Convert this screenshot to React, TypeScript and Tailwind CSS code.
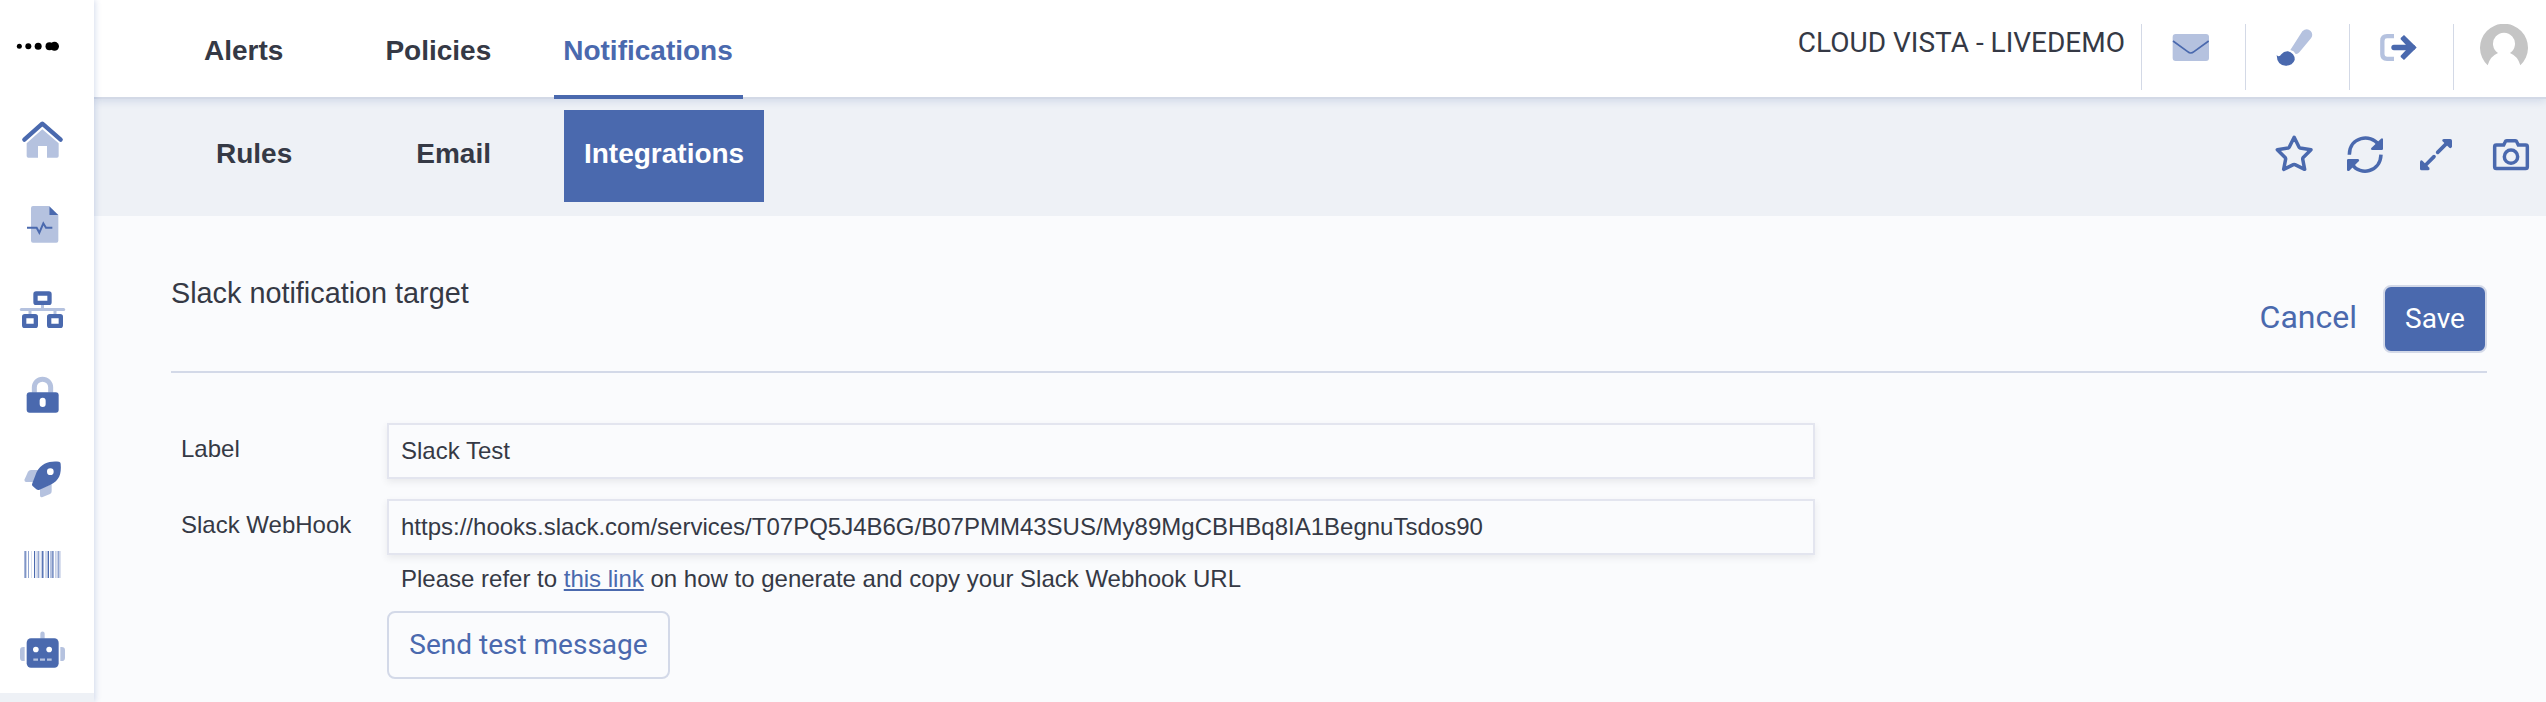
import React from "react";

const P = "#4a69ae";
const L = "#b5c2df";

const sideIcons: { name: string; top: number; art: React.ReactNode }[] = [
  {
    name: "Home",
    top: 291,
    art: (
      <>
        <path d="M127 388 L176 430 V468 Q176 473 171 473 H141 V438 H114 V473 H85 Q80 473 80 468 V430 Z" fill={L} />
        <path d="M73 419 L127 371 L182 419" fill="none" stroke={P} strokeWidth="13" strokeLinecap="round" strokeLinejoin="round" />
      </>
    ),
  },
  {
    name: "Reports",
    top: 546,
    art: (
      <>
        <path d="M99 618 H148 V645 H175 V722 Q175 728 169 728 H99 Q93 728 93 722 V624 Q93 618 99 618 Z" fill={L} />
        <path d="M148 619 L175 645 H148 Z" fill={P} />
        <path d="M81 683 H110 L118 698 L130 670 L138 683 H157" fill="none" stroke={P} strokeWidth="6" />
      </>
    ),
  },
  {
    name: "Network",
    top: 801,
    art: (
      <>
        <path d="M64 928.500 H191" stroke={L} strokeWidth="9" strokeLinecap="round" />
        <path d="M127.500 914 V926 M90 930 V943 M165 930 V943" stroke={L} strokeWidth="9" />
        <rect x="106.500" y="880.500" width="42" height="28" rx="2" fill="#fff" stroke={P} strokeWidth="13" strokeLinejoin="round" />
        <rect x="72.500" y="948.500" width="35" height="29" rx="2" fill="#fff" stroke={P} strokeWidth="13" strokeLinejoin="round" />
        <rect x="147.500" y="948.500" width="35" height="29" rx="2" fill="#fff" stroke={P} strokeWidth="13" strokeLinejoin="round" />
      </>
    ),
  },
  {
    name: "Security",
    top: 6,
    art: (
      <>
        <path d="M103 128 V112 A24.500 24.500 0 0 1 152 112 V128" fill="none" stroke={L} strokeWidth="15" />
        <rect x="80" y="127" width="96" height="61" rx="9" fill={P} />
        <rect x="119" y="143" width="18" height="28" rx="9" fill="#fff" />
      </>
    ),
  },
  {
    name: "Deploy",
    top: 261,
    art: (
      <>
        <path d="M116 360 H93 Q87 360 84 365 L74 388 Q72 396 79 396 H100 Z" fill={L} />
        <path d="M155 403 V424 Q155 430 150 432 L128 441 Q120 444 120 436 V416 Z" fill={L} />
        <path d="M110 366 C125 338 150 332 177 335 Q182 336 182 341 C185 372 177 392 152 404 L117 420 Q113 421 109 418 L97 407 Q95 404 97 400 Z" fill={P} />
        <circle cx="151" cy="365" r="10" fill="#fff" />
      </>
    ),
  },
  {
    name: "Barcode",
    top: 516,
    art: (
      <g shapeRendering="crispEdges">
        {[
          "#a9b8da", "#8095c6", "#ccd5e9", "#fff", "#92a5d0", "#fff", "#fff", "#dae0ef", "#fff", "#fff",
          "#4a69ae", "#e6eaf4", "#dae0ef", "#c8d1e7", "#92a5d0", "#dae0ef", "#eef1f7", "#c8d1e7", "#5b77b6", "#a9b8da",
          "#fff", "#d2daec", "#d2daec", "#b5c2df", "#4a69ae", "#fff", "#b5c2df", "#b5c2df", "#8095c6", "#a3b3d7",
          "#fff", "#c8d1e7", "#dae0ef", "#c8d1e7", "#92a5d0", "#c8d1e7", "#dae0ef",
        ].map((c, i) => (
          <rect key={i} x={72 + i * 3} y="603" width="3" height="81" fill={c} />
        ))}
      </g>
    ),
  },
  {
    name: "Assistant",
    top: 771,
    art: (
      <>
        <path d="M121 866 V851 A6.500 6.500 0 0 1 134 851 V866 Z" fill={L} />
        <path d="M74 891 H70 Q60 891 60 901 V923 Q60 933 70 933 H74 Z M181 891 H185 Q195 891 195 901 V923 Q195 933 185 933 H181 Z" fill={L} />
        <rect x="80" y="865" width="96" height="88" rx="13" fill={P} />
        <circle cx="107.500" cy="898.500" r="8.500" fill="#fff" />
        <circle cx="147.500" cy="898.500" r="8.500" fill="#fff" />
        <path d="M100 929 H114 M120 929 H135 M141 929 H155" stroke={L} strokeWidth="7" />
      </>
    ),
  },
];

const headerIcons: { name: string; left: number; art: React.ReactNode }[] = [
  {
    name: "Messages",
    left: 36,
    art: (
      <>
        <rect x="128" y="102" width="109" height="81" rx="9" fill={L} />
        <path d="M129 123 L173 155 Q182 163 192 155 L236 123" fill="none" stroke={P} strokeWidth="5" />
      </>
    ),
  },
  {
    name: "Theme",
    left: 348,
    art: (
      <>
        <path d="M517 94 Q530 82 542 93 Q551 104 543 115 L508 157 Q503 163 497 162 Q492 152 481 150 Z" fill={L} />
        <path d="M440 165 Q447 174 454 163 Q462 153 474 154 Q482 155 489 163 Q495 171 494 180 Q488 197 467 197 Q441 196 440 165 Z" fill={P} />
      </>
    ),
  },
  {
    name: "Log out",
    left: 660,
    art: (
      <>
        <path d="M792 108.500 H771 Q757 108.500 757 122 V163 Q757 176.500 771 176.500 H792" fill="none" stroke={L} strokeWidth="13" />
        <path d="M792 142.500 H848" stroke={P} strokeWidth="16" strokeLinecap="round" />
        <path d="M822 105 L860 142.500 L822 180 L812 171 V167 L828 150 V135 L812 118 V114 Z" fill={P} />
      </>
    ),
  },
];

const actions: { name: string; box: string; cls: string; art: React.ReactNode }[] = [
  {
    name: "Favourite",
    box: "66 60 132 132",
    cls: "",
    art: (
      <path d="M132.500 82 L147 111 Q148 113 150 114 L183 119 L159 143 Q158 145 158 147 L164 178 L135 164 Q132.500 163 130 164 L101 178 L107 147 Q107 145 106 143 L82 119 L115 114 Q117 113 118 111 Z" fill="none" stroke={P} strokeWidth="10.500" strokeLinejoin="round" />
    ),
  },
  {
    name: "Refresh",
    box: "279 60 132 132",
    cls: "ml-[27px]",
    art: (
      <>
        <path d="M298 134 C298 79 363 71 385 103 M393 134 C391 187 331 198 307 164" fill="none" stroke={P} strokeWidth="10.500" />
        <path d="M399 87 V117 Q399 120 395 120 H366 Q360 118 364 114 L393 86 Q397 83 399 87 Z" fill={P} />
        <path d="M291 181 V151 Q291 147 295 147 H324 Q330 149 326 154 L298 182 Q293 185 291 181 Z" fill={P} />
      </>
    ),
  },
  {
    name: "Expand",
    box: "492 60 132 132",
    cls: "ml-[27px]",
    art: (
      <>
        <path d="M563 127 L590 100 M552 140 L524 168" stroke={P} strokeWidth="11" strokeLinecap="round" />
        <path d="M581 87 H601 Q606 87 606 92 V110 Q603 117 598 113 L577 93 Q575 88 581 87 Z" fill={P} />
        <path d="M535 181 H515 Q510 181 510 176 V155 Q513 148 518 153 L538 173 Q541 179 535 181 Z" fill={P} />
      </>
    ),
  },
  {
    name: "Snapshot",
    box: "717 60 132 132",
    cls: "ml-[31px]",
    art: (
      <>
        <path d="M739 105 H761 L766 95 Q767 92 770 92 H796 Q799 92 800 95 L805 105 H827 Q832 105 832 110 V170 Q832 175.500 827 175.500 H739 Q734 175.500 734 170 V110 Q734 105 739 105 Z" fill="none" stroke={P} strokeWidth="10.500" />
        <circle cx="783" cy="140" r="20" fill="none" stroke={P} strokeWidth="10.500" />
      </>
    ),
  },
];

function Field({ label, value }: { label: string; value: string }) {
  return (
    <div className="flex h-14">
      <label className="w-[207px] pt-[9px] pl-px text-[24px] leading-[34px]">{label}</label>
      <div className="flex w-[1428px] items-center border-2 border-[#e3e5ef] pl-[12px] text-[24px] leading-[34px] shadow-[0_3px_7px_rgba(53,57,69,0.09)]">
        {value}
      </div>
    </div>
  );
}

export default function App() {
  return (
    <div className="flex h-[702px] w-[2546px] overflow-hidden bg-[#fafbfd] font-['Liberation_Sans',Arial,sans-serif] text-[#353945]">
      <aside className="relative z-20 flex w-[94px] shrink-0 flex-col bg-white shadow-[1px_0_6px_rgba(74,105,174,0.24)]">
        <svg width="94" height="97" viewBox="0 0 282 291">
          <circle cx="58" cy="139" r="7.500" />
          <circle cx="85" cy="139" r="9" />
          <circle cx="114.500" cy="139" r="10.500" />
          <circle cx="148.500" cy="139" r="12" />
          <circle cx="163.500" cy="139" r="13.500" />
        </svg>
        {sideIcons.map((i) => (
          <svg key={i.name} aria-label={i.name} width="94" height="85" viewBox={`0 ${i.top} 282 255`} className="shrink-0">
            {i.art}
          </svg>
        ))}
        <div className="mt-px h-[9px] bg-[#eef1f6]" />
      </aside>

      <div className="flex min-w-0 flex-1 flex-col">
        <header className="relative z-10 flex h-[99px] shrink-0 border-b-2 border-[#d3d9e6] bg-white shadow-[0_2px_8px_rgba(74,105,174,0.18)]">
          <nav className="flex h-[99px] pl-[100px] text-[28px] leading-10 font-bold">
            <span className="px-[10px] pt-[31px]">Alerts</span>
            <span className="ml-[82px] px-[10px] pt-[31px]">Policies</span>
            <span className="ml-[53px] border-b-4 border-[#4a69ae] pt-[31px] pr-[10px] pl-[9px] text-[#4a69ae]">Notifications</span>
          </nav>
          <div className="ml-auto flex">
            <div className="mr-4 pt-[23px] font-[Roboto,sans-serif] text-[28px] leading-10">CLOUD VISTA - LIVEDEMO</div>
            {headerIcons.map((i) => (
              <div key={i.name} className="mt-6 h-[66px] border-l border-[#d3d9e6]">
                <svg aria-label={i.name} width="103" height="66" viewBox={`${i.left} 72 309 198`}>
                  {i.art}
                </svg>
              </div>
            ))}
            <div className="mt-6 h-[66px] border-l border-[#d3d9e6]">
              <svg aria-label="Account" width="92" height="66" viewBox="972 72 276 198">
                <path d="M1073 196 A72 72 0 1 1 1171 196 Q1163 168 1140 159 A33 33 0 1 0 1104 159 Q1081 168 1073 196 Z" fill="#c5c5c5" />
              </svg>
            </div>
          </div>
        </header>

        <div className="flex h-[117px] shrink-0 items-start bg-[#eef1f6]">
          <nav className="flex pt-[11px] pl-[102px] text-[28px] leading-10 font-bold">
            <span className="h-[92px] px-5 pt-[24px]">Rules</span>
            <span className="ml-[84px] h-[92px] px-5 pt-[24px]">Email</span>
            <span className="ml-[53px] h-[92px] w-[200px] bg-[#4a69ae] px-5 pt-[24px] text-white">Integrations</span>
          </nav>
          <div className="mt-[31px] ml-auto flex pr-[13px]">
            {actions.map((a) => (
              <svg key={a.name} aria-label={a.name} width="44" height="44" viewBox={a.box} className={a.cls}>
                {a.art}
              </svg>
            ))}
          </div>
        </div>

        <main className="pr-[59px] pl-[77px]">
          <div className="flex h-[157px] items-start border-b-2 border-[#d3d9e8]">
            <h1 className="pt-[57px] text-[28.800px] leading-10">Slack notification target</h1>
            <div className="ml-auto flex pt-[69px] font-[Roboto,sans-serif]">
              <button className="mr-[26px] h-[64px] text-[32px] leading-[64px] text-[#4a69ae]">Cancel</button>
              <button className="h-[68px] w-[104px] rounded-[8px] border-2 border-[#d3d9e8] bg-[#4a69ae] text-[28px] text-white">Save</button>
            </div>
          </div>
          <div className="flex flex-col gap-5 pt-[50px] pl-[9px]">
            <Field label="Label" value="Slack Test" />
            <Field label="Slack WebHook" value="https://hooks.slack.com/services/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s90" />
          </div>
          <div className="flex flex-col items-start pl-[216px]">
            <p className="pt-[7px] pl-[14px] text-[24px] leading-[34px]">
              Please refer to <a className="text-[#4a69ae] underline decoration-2 underline-offset-2">this link</a> on how to generate and copy your Slack Webhook URL
            </p>
            <button className="mt-[15px] h-[68px] w-[283px] rounded-[8px] border-2 border-[#d3d9e8] font-[Roboto,sans-serif] text-[28px] text-[#4a69ae]">
              Send test message
            </button>
          </div>
        </main>
      </div>
    </div>
  );
}
